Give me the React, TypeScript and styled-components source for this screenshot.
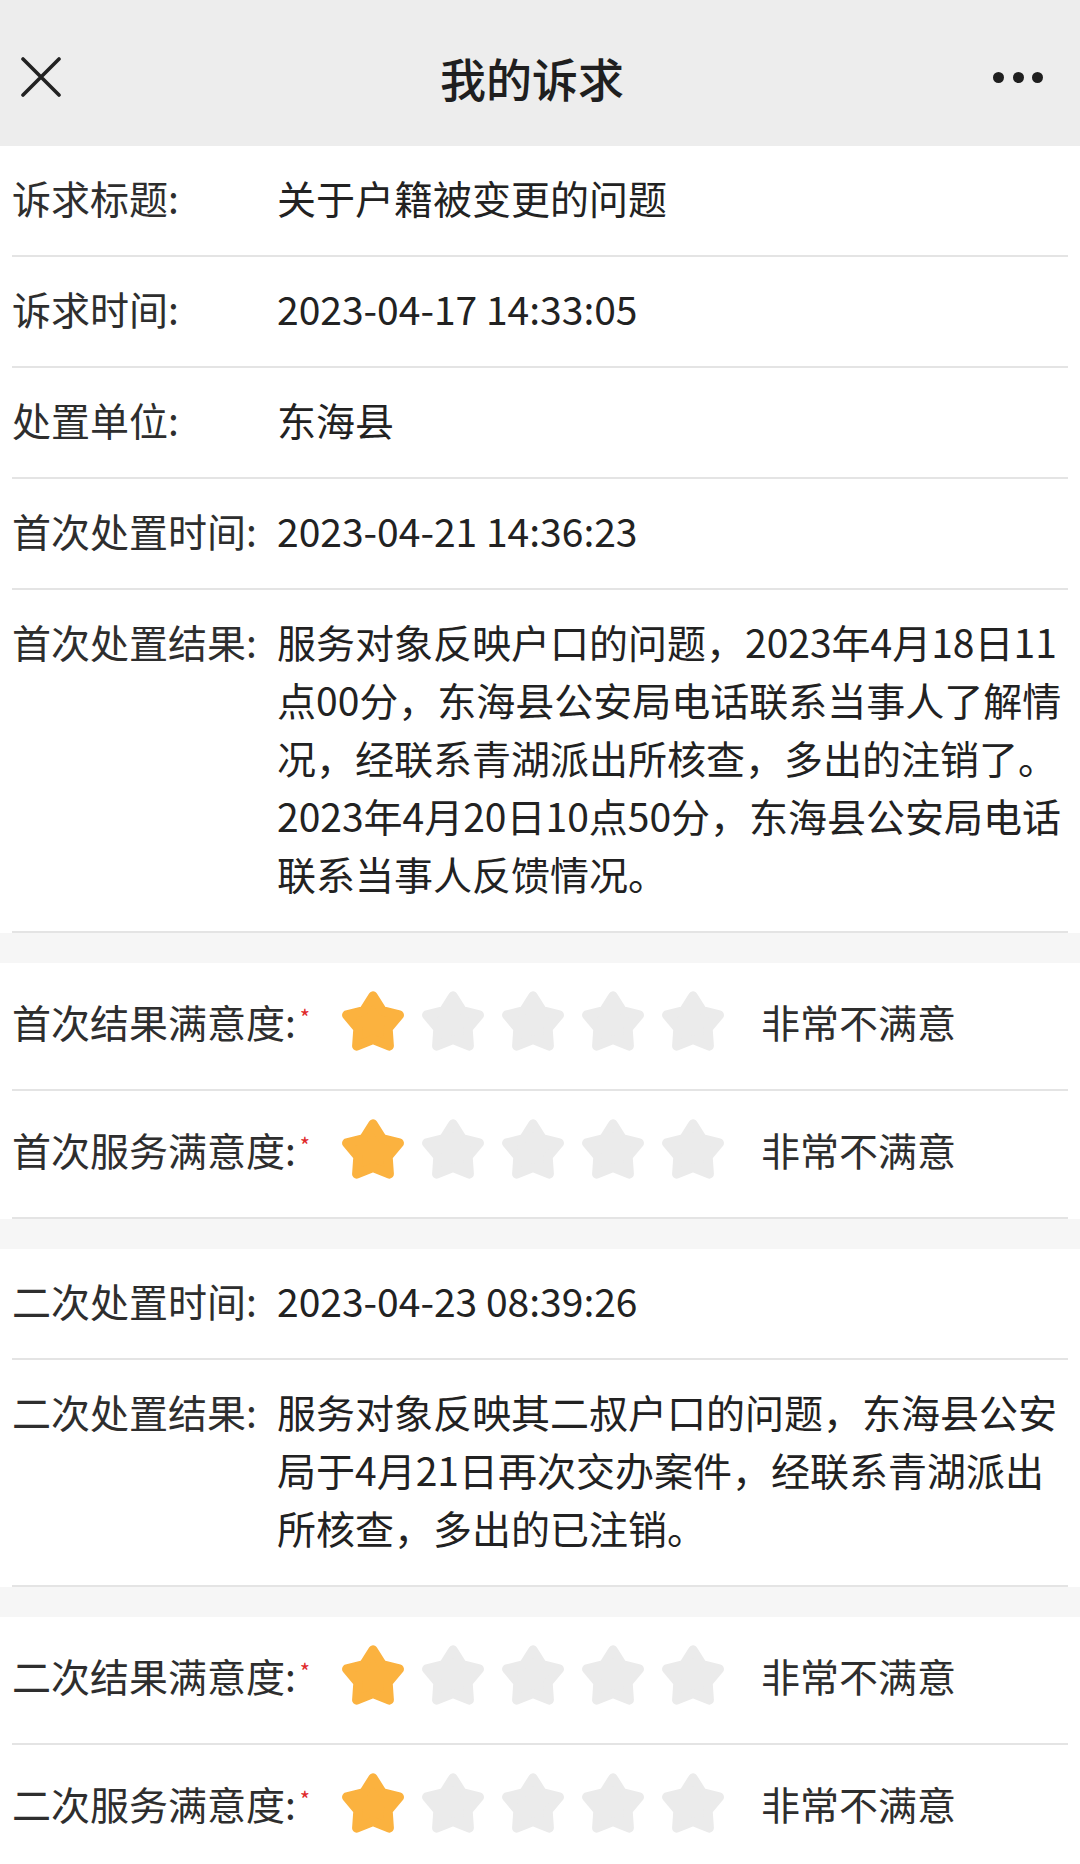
import React from 'react';
import styled, { createGlobalStyle } from 'styled-components';

const GlobalStyle = createGlobalStyle`
  html, body {
    margin: 0;
    padding: 0;
    background: #fff;
  }
  body {
    font-family: 'Noto Sans CJK SC', 'Noto Sans', sans-serif;
    color: #2a2a2a;
  }
`;

const Page = styled.div`
  width: 1080px;
  min-height: 1864px;
  background: #fff;
`;

const Header = styled.header`
  display: grid;
  grid-template-columns: 1fr auto 1fr;
  align-items: center;
  height: 138px;
  padding: 8px 37px 0 21px;
  background: #ededed;
`;

const Title = styled.h1`
  margin: 0;
  font-size: 46px;
  font-weight: 500;
  line-height: 1;
  color: #1f1f1f;
`;

const CloseButton = styled.button`
  justify-self: start;
  display: flex;
  padding: 0;
  border: 0;
  background: none;
  cursor: pointer;
`;

const MoreButton = styled.button`
  justify-self: end;
  display: flex;
  gap: 8.5px;
  padding: 0;
  border: 0;
  background: none;
  cursor: pointer;
`;

const Dot = styled.span`
  width: 11px;
  height: 11px;
  border-radius: 50%;
  background: #1f1f1f;
`;

const Section = styled.section`
  background: #fff;
`;

const Band = styled.div`
  height: 30px;
  background: #f6f6f6;
`;

const Row = styled.div`
  display: flex;
  margin: 0 12px;
  padding: 22px 0 29px;
  border-bottom: 2px solid #e4e4e4;
  font-size: 39px;
  line-height: 58px;
`;

const Label = styled.div`
  flex-shrink: 0;
  width: 265px;
  color: #2e2e2e;
`;

const Value = styled.div`
  flex: 1;
  min-width: 0;
  color: #222;
`;

const RatingRow = styled.div`
  display: flex;
  align-items: center;
  margin: 0 12px;
  padding: 25px 0 35px;
  border-bottom: 2px solid #e4e4e4;
  font-size: 39px;
  line-height: 58px;
`;

const RatingLabel = styled.div`
  flex-shrink: 0;
  width: 328px;
  color: #2e2e2e;
`;

const Required = styled.span`
  margin-left: 4px;
  font-size: 22px;
  line-height: 1;
  vertical-align: 12px;
  color: #e02a2a;
`;

const Stars = styled.div`
  display: flex;
  gap: 14px;
`;

const Verdict = styled.span`
  margin-left: 35px;
  color: #2e2e2e;
`;

// chubby five-point star, corners rounded by a same-coloured stroke
const starPoints = Array.from({ length: 10 }, (_, i) => {
  const r = i % 2 === 0 ? 42 : 24;
  const a = (Math.PI / 5) * i - Math.PI / 2;
  return `${(50 + r * Math.cos(a)).toFixed(2)},${(54 + r * Math.sin(a)).toFixed(2)}`;
}).join(' ');

const Star = ({ on }: { on: boolean }) => {
  const c = on ? '#fbb23f' : '#ebebeb';
  return (
    <svg width={66} height={66} viewBox="0 0 100 100">
      <polygon points={starPoints} fill={c} stroke={c} strokeWidth={14} strokeLinejoin="round" />
    </svg>
  );
};

const Rating = ({ label, score, verdict }: { label: string; score: number; verdict: string }) => (
  <RatingRow>
    <RatingLabel>
      {label}:<Required>*</Required>
    </RatingLabel>
    <Stars>
      {[1, 2, 3, 4, 5].map((n) => (
        <Star key={n} on={n <= score} />
      ))}
    </Stars>
    <Verdict>{verdict}</Verdict>
  </RatingRow>
);

const Field = ({ label, children }: { label: string; children: React.ReactNode }) => (
  <Row>
    <Label>{label}:</Label>
    <Value>{children}</Value>
  </Row>
);

const App = () => {
  return (
    <Page>
      <GlobalStyle />
      <Header>
        <CloseButton aria-label="关闭">
          <svg width={40} height={40} viewBox="0 0 40 40">
            <path d="M2 2 L38 38 M38 2 L2 38" stroke="#222" strokeWidth={3.6} strokeLinecap="round" />
          </svg>
        </CloseButton>
        <Title>我的诉求</Title>
        <MoreButton aria-label="更多">
          <Dot />
          <Dot />
          <Dot />
        </MoreButton>
      </Header>

      <Section>
        <Field label="诉求标题">关于户籍被变更的问题</Field>
        <Field label="诉求时间">2023-04-17 14:33:05</Field>
        <Field label="处置单位">东海县</Field>
        <Field label="首次处置时间">2023-04-21 14:36:23</Field>
        <Field label="首次处置结果">
          服务对象反映户口的问题，2023年4月18日11点00分，东海县公安局电话联系当事人了解情况，经联系青湖派出所核查，多出的注销了。2023年4月20日10点50分，东海县公安局电话联系当事人反馈情况。
        </Field>
      </Section>
      <Band />

      <Section>
        <Rating label="首次结果满意度" score={1} verdict="非常不满意" />
        <Rating label="首次服务满意度" score={1} verdict="非常不满意" />
      </Section>
      <Band />

      <Section>
        <Field label="二次处置时间">2023-04-23 08:39:26</Field>
        <Field label="二次处置结果">
          服务对象反映其二叔户口的问题，东海县公安局于4月21日再次交办案件，经联系青湖派出所核查，多出的已注销。
        </Field>
      </Section>
      <Band />

      <Section>
        <Rating label="二次结果满意度" score={1} verdict="非常不满意" />
        <Rating label="二次服务满意度" score={1} verdict="非常不满意" />
      </Section>
    </Page>
  );
};

export default App;
